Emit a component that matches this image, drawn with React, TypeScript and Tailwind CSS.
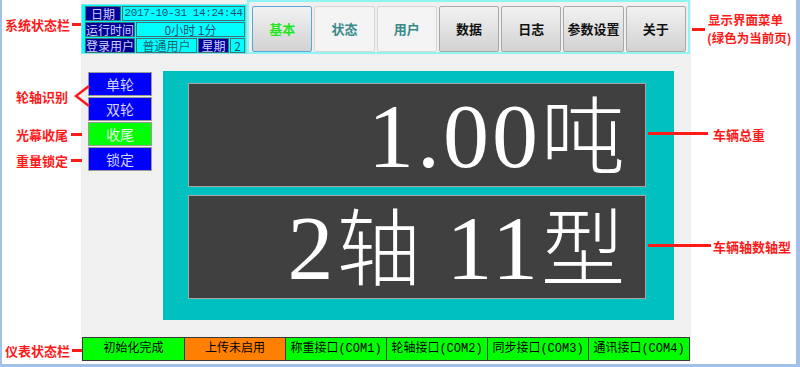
import React from 'react';

const CJK = "font-['Noto_Sans_CJK_SC',sans-serif]";
const RED = 'text-[#ff1a1a]';

const navItems = [
  { label: '基本', kind: 'active' },
  { label: '状态', kind: 'flat' },
  { label: '用户', kind: 'flat' },
  { label: '数据', kind: 'normal' },
  { label: '日志', kind: 'normal' },
  { label: '参数设置', kind: 'normal' },
  { label: '关于', kind: 'normal' },
];

const navClass: Record<string, string> = {
  active: 'border-[#5aa6d6] bg-gradient-to-b from-[#f2f2f2] to-[#d2d2d2] text-[#22e622]',
  flat: 'border-[#d6d6d6] bg-[#f4f4f4] text-[#3a8a8a]',
  normal: 'border-[#a8a8a8] bg-gradient-to-b from-[#f2f2f2] to-[#d2d2d2] text-[#111]',
};

const sideButtons = [
  { label: '单轮', green: false },
  { label: '双轮', green: false },
  { label: '收尾', green: true },
  { label: '锁定', green: false },
];

const meterStatus = [
  { label: '初始化完成', orange: false },
  { label: '上传未启用', orange: true },
  { label: '称重接口(COM1)', orange: false },
  { label: '轮轴接口(COM2)', orange: false },
  { label: '同步接口(COM3)', orange: false },
  { label: '通讯接口(COM4)', orange: false },
];

const Dash = ({ w = 'w-[9px]' }: { w?: string }) => <div className={`${w} h-[3px] shrink-0 bg-[#ff1a1a]`} />;

const Label = ({ className = '', children }: { className?: string; children: React.ReactNode }) => (
  <div className={`flex items-center justify-center border border-[#3f7474] whitespace-nowrap ${className}`}>{children}</div>
);

const StatusPanel = () => (
  <div className={`w-[166px] h-[50px] mt-[4px] bg-[#00ffff] border border-[#8ae6e6] pl-[3px] pr-[1px] pt-[1px] flex flex-col gap-[1px] text-[12px] leading-none ${CJK}`}>
    <div className="flex h-[15px] gap-[1px]">
      <Label className="w-[36px] bg-[#000099] text-[#d0d0ff]">日期</Label>
      <Label className="flex-1 text-[#1d4f74] font-['Liberation_Mono',monospace] text-[11px] tracking-[-0.4px]">2017-10-31 14:24:44</Label>
    </div>
    <div className="flex h-[15px] gap-[1px]">
      <Label className="w-[50px] bg-[#000099] text-[#d0d0ff]">运行时间</Label>
      <Label className="flex-1 text-[#1d4f74]">0小时 1分</Label>
    </div>
    <div className="flex h-[15px] gap-[1px]">
      <Label className="w-[50px] bg-[#000099] text-[#d0d0ff]">登录用户</Label>
      <Label className="w-[61px] text-[#1d5f6f]">普通用户</Label>
      <Label className="w-[31px] bg-[#000099] text-[#d0d0ff]">星期</Label>
      <Label className="flex-1 text-[#1d4f74]">2</Label>
    </div>
  </div>
);

const NavBar = () => (
  <div className="w-[443px] h-[54px] border-2 border-[#8ef4f4] bg-[#f0f0f0] pl-[3px] pr-[2px] pt-[4px]">
    <div className="grid grid-cols-7 gap-[2px] h-[46px]">
      {navItems.map((n) => (
        <div
          key={n.label}
          className={`flex items-center justify-center rounded-[2px] border text-[13px] font-bold ${CJK} ${navClass[n.kind]}`}
        >
          {n.label}
        </div>
      ))}
    </div>
  </div>
);

const Readout = ({ children }: { children: React.ReactNode }) => (
  <div className="h-[104px] bg-[#404040] border border-[#a8a8a8] flex items-center justify-end pr-[20px] text-white">
    <div className="leading-none whitespace-pre">{children}</div>
  </div>
);

const Num = ({ children }: { children: React.ReactNode }) => (
  <span className="font-['Liberation_Serif',serif] text-[92px] tracking-[3px]">{children}</span>
);

const Han = ({ children }: { children: React.ReactNode }) => (
  <span className={`${CJK} text-[84px] font-light`}>{children}</span>
);

export default function App() {
  return (
    <div className="relative w-[800px] h-[367px] bg-white border-l-2 border-r-[4px] border-b-[3px] border-[#a3c1e8] flex overflow-hidden">
      {/* left callouts */}
      <div className={`relative z-10 w-[79px] shrink-0 flex flex-col text-[13px] font-bold leading-none whitespace-nowrap ${CJK} ${RED}`}>
        <div className="mt-[14px] h-[20px] flex items-center gap-[2px] pl-[3px]">
          <span>系统状态栏</span>
          <Dash />
        </div>
        <div className="mt-[49px] h-[26px] flex items-center gap-[6px] pl-[14px]">
          <span>轮轴识别</span>
          <svg className="shrink-0" width="16" height="24" viewBox="0 0 16 24">
            <path d="M15 2 L2 12 L15 22" fill="none" stroke="#ff1a1a" strokeWidth="2.6" />
          </svg>
        </div>
        <div className="mt-[15px] h-[20px] flex items-center gap-[3px] pl-[14px]">
          <span>光幕收尾</span>
          <Dash w="w-[11px]" />
        </div>
        <div className="mt-[6px] h-[20px] flex items-center gap-[3px] pl-[14px]">
          <span>重量锁定</span>
          <Dash w="w-[11px]" />
        </div>
        <div className="mt-[170px] h-[20px] flex items-center gap-[2px] pl-[3px]">
          <span>仪表状态栏</span>
          <Dash w="w-[10px]" />
        </div>
      </div>

      {/* instrument screen */}
      <div className="w-[610px] h-[361px] shrink-0 bg-[#f0f0f0] flex flex-col">
        <div className="flex h-[55px]">
          <StatusPanel />
          <NavBar />
        </div>

        <div className="flex mt-[16px] h-[249px]">
          <div className="flex flex-col gap-[1px] ml-[7px] mt-[1px] w-[64px]">
            {sideButtons.map((b) => (
              <div
                key={b.label}
                className={`h-[24px] flex items-center justify-center border border-[#9a9a9a] text-[14px] ${CJK} ${
                  b.green ? 'bg-[#00ff00] text-[#eaffea]' : 'bg-[#0000ff] text-[#d4d4ff]'
                }`}
              >
                {b.label}
              </div>
            ))}
          </div>
          <div className="ml-[11px] w-[511px] bg-[#00c0c0] pl-[25px] pr-[28px] pt-[12px] flex flex-col gap-[8px]">
            <Readout>
              <Num>1.00</Num>
              <Han>吨</Han>
            </Readout>
            <Readout>
              <Num>2</Num>
              <Han>轴</Han>
              <Num> 11</Num>
              <Han>型</Han>
            </Readout>
          </div>
        </div>

        <div className="mt-[17px] ml-[1px] w-[608px] h-[24px] grid grid-cols-6 border border-[#3a3a3a]">
          {meterStatus.map((s, i) => (
            <div
              key={s.label}
              className={`flex items-center justify-center text-[12px] text-black whitespace-nowrap font-['Liberation_Mono','Noto_Sans_CJK_SC',monospace] ${
                i > 0 ? 'border-l border-[#3a3a3a]' : ''
              } ${s.orange ? 'bg-[#ff8000]' : 'bg-[#00ff00]'}`}
            >
              {s.label}
            </div>
          ))}
        </div>
      </div>

      {/* right callouts */}
      <div className={`flex-1 flex flex-col font-bold leading-none whitespace-nowrap ${CJK} ${RED}`}>
        <div className="mt-[11px] flex items-center gap-[3px] pl-[1px]">
          <Dash w="w-[13px]" />
          <div className="flex flex-col text-[12.5px] leading-[18px]">
            <span>显示界面菜单</span>
            <span className="-ml-[1px]">(绿色为当前页)</span>
          </div>
        </div>
        <div className="mt-[79px] pl-[22px] text-[13px] leading-[17px]">车辆总重</div>
        <div className="mt-[95px] pl-[22px] text-[13px] leading-[17px]">车辆轴数轴型</div>
      </div>

      {/* callout leader lines over the screen */}
      <div className="absolute left-[646px] top-[132px] w-[60px] h-[3px] bg-[#ff1a1a]" />
      <div className="absolute left-[646px] top-[244px] w-[63px] h-[3px] bg-[#ff1a1a]" />
    </div>
  );
}
